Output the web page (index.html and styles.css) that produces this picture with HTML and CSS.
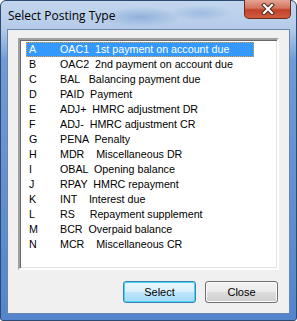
FILE: index.html
```html
<!DOCTYPE html>
<html lang="en">
<head>
  <meta charset="UTF-8">
  <title>Select Posting Type</title>
  <link rel="stylesheet" href="styles.css">
</head>
<body>
  <div class="window">
    <div class="titlebar">
      <span class="title">Select Posting Type</span>
      <button class="close-x" aria-label="Close">
        <svg width="14" height="12" viewBox="0 0 14 12">
          <path d="M3 2 L11 10 M11 2 L3 10" stroke="#4a2a20" stroke-width="4.2" stroke-linecap="square" fill="none"/>
          <path d="M3 2 L11 10 M11 2 L3 10" stroke="#ffffff" stroke-width="2.2" stroke-linecap="square" fill="none"/>
        </svg>
      </button>
    </div>
    <div class="client">
      <ul class="list">
        <li class="item selected"><span class="key">A</span><span class="desc">OAC1  1st payment on account due</span></li>
        <li class="item"><span class="key">B</span><span class="desc">OAC2  2nd payment on account due</span></li>
        <li class="item"><span class="key">C</span><span class="desc">BAL   Balancing payment due</span></li>
        <li class="item"><span class="key">D</span><span class="desc">PAID  Payment</span></li>
        <li class="item"><span class="key">E</span><span class="desc">ADJ+  HMRC adjustment DR</span></li>
        <li class="item"><span class="key">F</span><span class="desc">ADJ-  HMRC adjustment CR</span></li>
        <li class="item"><span class="key">G</span><span class="desc">PENA  Penalty</span></li>
        <li class="item"><span class="key">H</span><span class="desc">MDR    Miscellaneous DR</span></li>
        <li class="item"><span class="key">I</span><span class="desc">OBAL  Opening balance</span></li>
        <li class="item"><span class="key">J</span><span class="desc">RPAY  HMRC repayment</span></li>
        <li class="item"><span class="key">K</span><span class="desc">INT    Interest due</span></li>
        <li class="item"><span class="key">L</span><span class="desc">RS     Repayment supplement</span></li>
        <li class="item"><span class="key">M</span><span class="desc">BCR  Overpaid balance</span></li>
        <li class="item"><span class="key">N</span><span class="desc">MCR    Miscellaneous CR</span></li>
      </ul>
      <div class="actions">
        <button class="btn btn-default">Select</button>
        <button class="btn">Close</button>
      </div>
    </div>
  </div>
</body>
</html>
```

FILE: styles.css
```css
body {
  margin: 0;
  background: #ffffff;
  font-family: 'Liberation Sans', Arial, sans-serif;
}

/* Окно */
.window {
  width: 297px;
  height: 321px;
  box-sizing: border-box;
  border: 1px solid #2c4a72;
  border-radius: 6px 6px 3px 3px;
  padding: 0 6px 6px;
  display: flex;
  flex-direction: column;
  background:
    radial-gradient(ellipse 40px 10px at 140px 16px, rgba(110, 150, 205, 0.55), transparent),
    radial-gradient(ellipse 30px 8px at 200px 12px, rgba(120, 160, 210, 0.45), transparent),
    linear-gradient(to bottom, #c2d6ee 0, #b4cbe8 28px, #6f9ad6 60px, #5485cc 100%);
}

.titlebar {
  height: 28px;
  display: flex;
  align-items: flex-start;
  justify-content: space-between;
}

.title {
  margin: 6px 0 0 1px;
  font-family: 'Open Sans', 'Noto Sans', sans-serif;
  font-size: 12px;
  color: #000000;
}

.close-x {
  width: 47px;
  height: 19px;
  margin: -1px -1px 0 0;
  padding: 0;
  border: 1px solid #6d2a1e;
  border-top: none;
  border-radius: 0 0 5px 5px;
  background: linear-gradient(to bottom, #e4a595 0, #d3735c 45%, #c24129 55%, #d15c3f 100%);
  display: flex;
  align-items: center;
  justify-content: center;
}

/* Рабочая область */
.client {
  flex: 1;
  border: 1px solid #6a86ad;
  background: #f0f0f0;
  padding: 8px 10px 0 10px;
  display: flex;
  flex-direction: column;
}

.list {
  margin: 0;
  padding: 2px 0 0 6px;
  list-style: none;
  height: 232px;
  box-sizing: border-box;
  background: #ffffff;
  border: 2px solid;
  border-color: #a0a0a0 #ffffff #ffffff #a0a0a0;
  box-shadow: inset 1px 1px 0 #696969, inset -1px -1px 0 #e3e3e3;
}

.item {
  width: 228px;
  height: 15px;
  line-height: 15px;
  font-size: 10.7px;
  color: #000000;
  white-space: pre;
  display: flex;
}

.item.selected {
  background: #3399ff;
  color: #ffffff;
  outline: 1px dotted #e8a040;
  outline-offset: -1px;
}

.key {
  width: 34px;
  padding-left: 3px;
  box-sizing: border-box;
}

.actions {
  display: flex;
  justify-content: flex-end;
  gap: 9px;
  margin-top: 11px;
  padding-right: 1px;
}

.btn {
  width: 73px;
  height: 22px;
  padding: 0;
  font-family: 'Liberation Sans', Arial, sans-serif;
  font-size: 11px;
  color: #000000;
  border: 1px solid #707070;
  border-radius: 3px;
  background: linear-gradient(to bottom, #f2f2f2 0, #ebebeb 50%, #dddddd 51%, #cfcfcf 100%);
  box-shadow: inset 0 0 0 1px #fcfcfc;
}

.btn-default {
  border-color: #3c7fb1;
  background: linear-gradient(to bottom, #eaf6fd 0, #d9f0fc 50%, #bee6fd 51%, #a7d9f5 100%);
  box-shadow: inset 0 0 0 1px #48d7f7;
}
```
